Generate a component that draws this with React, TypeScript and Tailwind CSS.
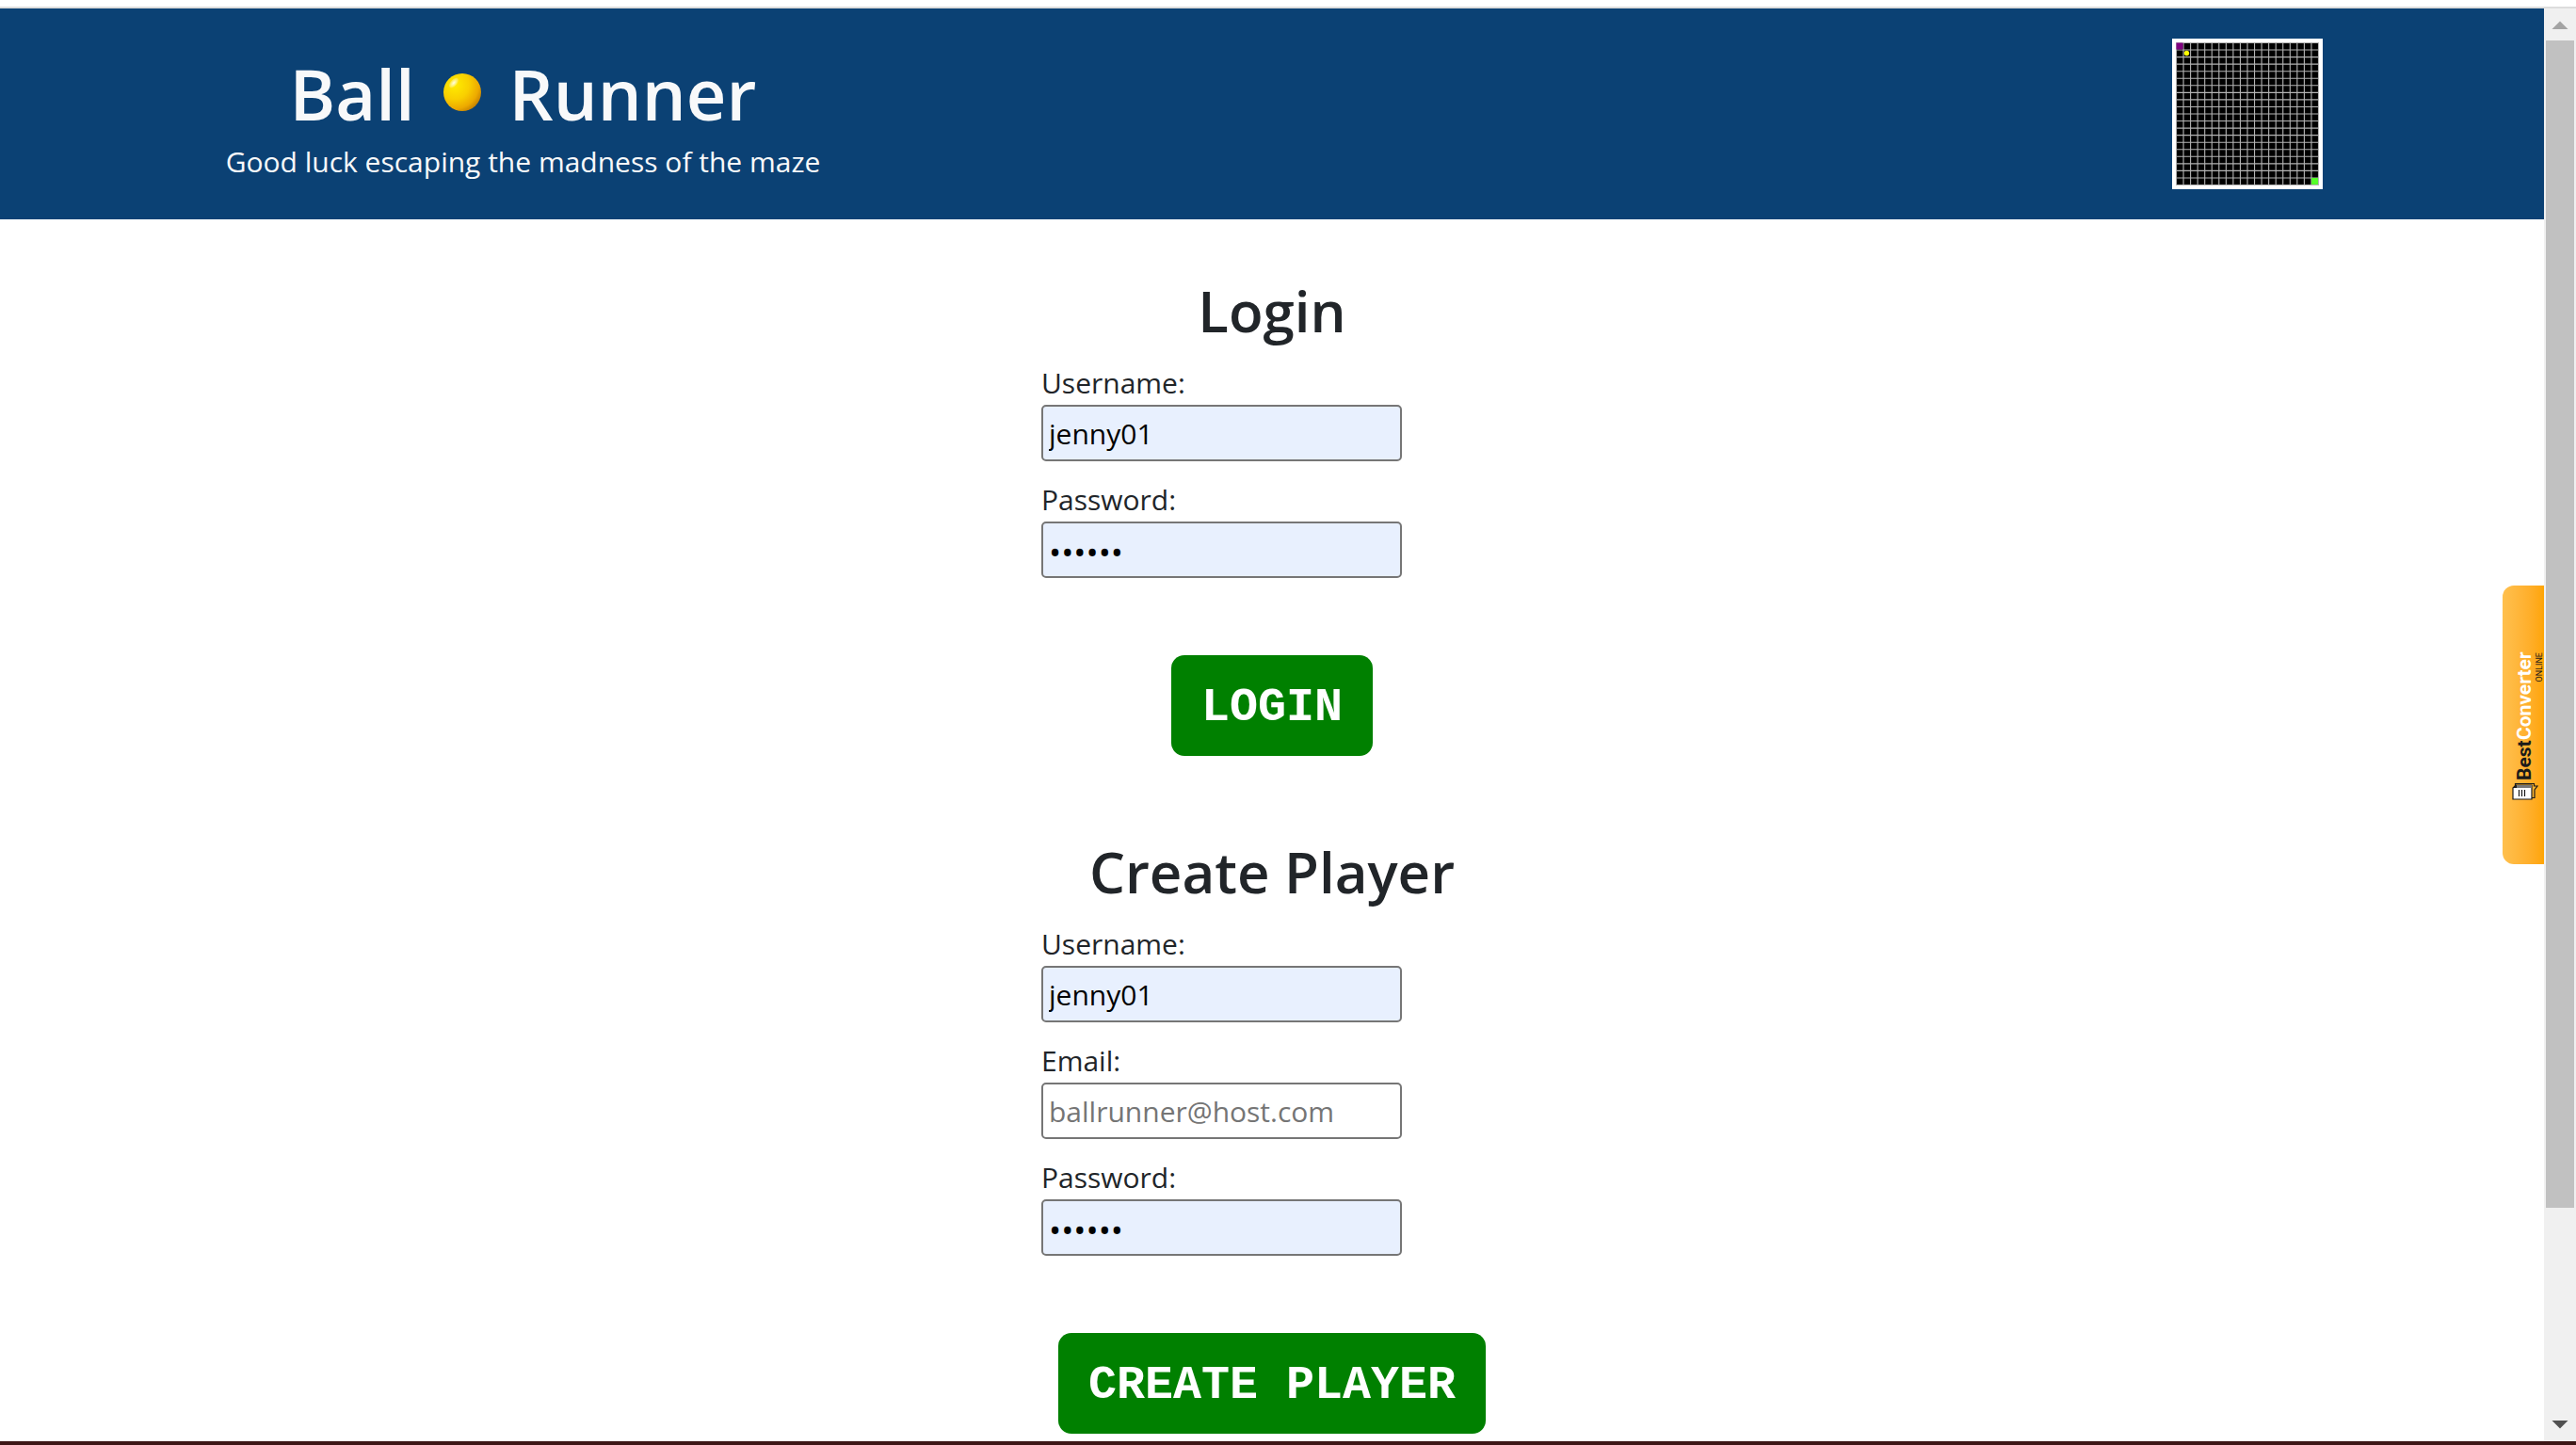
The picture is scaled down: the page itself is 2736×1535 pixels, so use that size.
import React from "react";

type FieldProps = {
  id: string;
  label: string;
  type?: string;
  value?: string;
  placeholder?: string;
};

function Field({ id, label, type = "text", value, placeholder }: FieldProps) {
  const size = type === "password" ? "text-[35px] pt-1" : "text-[30px]";
  return (
    <div className="mb-4 flex flex-col items-start">
      <label htmlFor={id} className="pt-[2px] text-[30px] leading-[46px]">
        {label}
      </label>
      <input
        id={id}
        type={type}
        defaultValue={value}
        placeholder={placeholder}
        className={`h-[60px] w-[383px] rounded-[5px] border-2 border-[#767676] bg-white px-[6px] text-black placeholder:text-[#757575] not-placeholder-shown:bg-[#e8f0fe] ${size}`}
      />
    </div>
  );
}

function Section({
  title,
  action,
  children,
}: {
  title: string;
  action: string;
  children: React.ReactNode;
}) {
  return (
    <form className="flex flex-col items-center" onSubmit={(e) => e.preventDefault()}>
      <h2 className="mb-[10px] text-[60px] leading-[83px] font-semibold">{title}</h2>
      <div className="w-[490px]">{children}</div>
      <button
        type="submit"
        className="mt-[66px] h-[107px] rounded-[14px] bg-[#008000] px-8 pt-1 font-['Courier_New','Liberation_Mono',monospace] text-[50px] font-bold text-white"
      >
        {action}
      </button>
    </form>
  );
}

function Ball() {
  return (
    <svg viewBox="0 0 40 40" className="mb-1 size-10" aria-hidden="true">
      <defs>
        <radialGradient id="ball" cx="0.3" cy="0.3" r="0.85">
          <stop offset="0" stopColor="#ffec00" />
          <stop offset="0.45" stopColor="#f9cf00" />
          <stop offset="0.75" stopColor="#eda900" />
          <stop offset="1" stopColor="#b26f00" />
        </radialGradient>
        <radialGradient id="shine">
          <stop offset="0" stopColor="#fff" stopOpacity="0.9" />
          <stop offset="1" stopColor="#fff" stopOpacity="0.15" />
        </radialGradient>
      </defs>
      <circle cx="20" cy="20" r="20" fill="url(#ball)" />
      <ellipse cx="11" cy="10" rx="3.5" ry="6.5" transform="rotate(42 11 10)" fill="url(#shine)" />
    </svg>
  );
}

const lines = Array.from({ length: 21 }, (_, i) => i * 7.55 + 0.5);

function Maze() {
  return (
    <svg
      viewBox="0 0 152 152"
      className="box-content size-[152px] border-4 border-white bg-black"
      role="img"
      aria-label="Maze"
    >
      {lines.map((p) => (
        <path key={p} d={`M${p} 0V152M0 ${p}H152`} stroke="#b4b4b4" strokeWidth="1.1" />
      ))}
      <rect x="0.5" y="0.5" width="7" height="7" fill="#800080" />
      <circle cx="11.5" cy="11.5" r="2.7" fill="#ffff00" />
      <rect x="144" y="144" width="7" height="7" fill="#55ff2a" />
    </svg>
  );
}

function ConverterTab() {
  return (
    <a
      href="#converter"
      className="absolute top-[622px] right-[34px] flex h-[296px] w-11 flex-col items-start rounded-l-[12px] bg-linear-to-r from-[#ffc04d] to-[#ffa500] pt-[68px] pl-[10px] font-['Roboto',sans-serif]"
    >
      <span className="flex h-[139px] items-start pl-[2px]">
        <span className="flex h-full w-[22px] rotate-180 items-center text-[21px] leading-[22px] font-bold text-white [writing-mode:vertical-rl]">
          <span className="text-[#1a1a1a]">Best</span>Converter
        </span>
        <span className="mt-[3px] w-[10px] rotate-180 text-[9px] leading-[10px] text-[#1a1a1a] [writing-mode:vertical-rl]">
          ONLINE
        </span>
      </span>
      <svg viewBox="0 0 28 20" className="mt-[2px] h-5 w-7" aria-hidden="true">
        <path
          d="M3.5 5V1.5H23.5V4H27L24 8V16.5H20"
          fill="#ffb52e"
          stroke="#1a1a1a"
          strokeWidth="1.2"
        />
        <path d="M4 3H21V18H1V6Z" fill="#fff" stroke="#1a1a1a" strokeWidth="1.2" />
        <path d="M4 3H21V6H4Z" fill="#777" />
        <path d="M1 6H5V2.5Z" fill="#1a1a1a" />
        <path d="M7.5 8V15M10.5 8V15M13.5 8V15" stroke="#1a1a1a" strokeWidth="1.2" />
      </svg>
    </a>
  );
}

function ScrollRail() {
  return (
    <div className="flex w-[34px] shrink-0 flex-col bg-[#f0f0f0] px-[2px]" aria-hidden="true">
      <svg viewBox="0 0 30 34" className="h-[34px] w-[30px] shrink-0">
        <path d="M15 13.5L23.5 22H6.5Z" fill="#a3a3a3" />
      </svg>
      <div className="flex-1">
        <div className="h-[1240px] bg-[#c1c1c1]" />
      </div>
      <svg viewBox="0 0 30 34" className="h-[34px] w-[30px] shrink-0">
        <path d="M15 20.5L23.5 12H6.5Z" fill="#505050" />
      </svg>
    </div>
  );
}

export default function App() {
  return (
    <div className="relative flex min-h-screen flex-col bg-white font-['Open_Sans',sans-serif] text-[#212529]">
      <div className="h-[9px] border-b-2 border-[#dcdcdc]" />
      <div className="flex flex-1">
        <div className="min-w-0 flex-1">
          <header className="flex justify-between bg-[#0b4174] px-[235px] py-8 text-[#f8f9fa]">
            <div className="flex min-w-[641px] flex-col items-center pt-[11px]">
              <h1 className="flex items-center gap-[30px] text-[74px] leading-[96px] font-semibold">
                Ball <Ball /> Runner
              </h1>
              <p className="text-[30px] leading-[48px]">
                Good luck escaping the madness of the maze
              </p>
            </div>
            <Maze />
          </header>
          <main className="flex flex-col gap-[82px] pt-14 pb-2">
            <Section title="Login" action="LOGIN">
              <Field id="login-username" label="Username:" value="jenny01" />
              <Field id="login-password" label="Password:" type="password" value="abc123" />
            </Section>
            <Section title="Create Player" action="CREATE PLAYER">
              <Field id="new-username" label="Username:" value="jenny01" />
              <Field
                id="new-email"
                label="Email:"
                type="email"
                placeholder="ballrunner@host.com"
              />
              <Field id="new-password" label="Password:" type="password" value="abc123" />
            </Section>
          </main>
        </div>
        <ScrollRail />
      </div>
      <ConverterTab />
      <div className="h-1 bg-[#3d1616]" />
    </div>
  );
}
